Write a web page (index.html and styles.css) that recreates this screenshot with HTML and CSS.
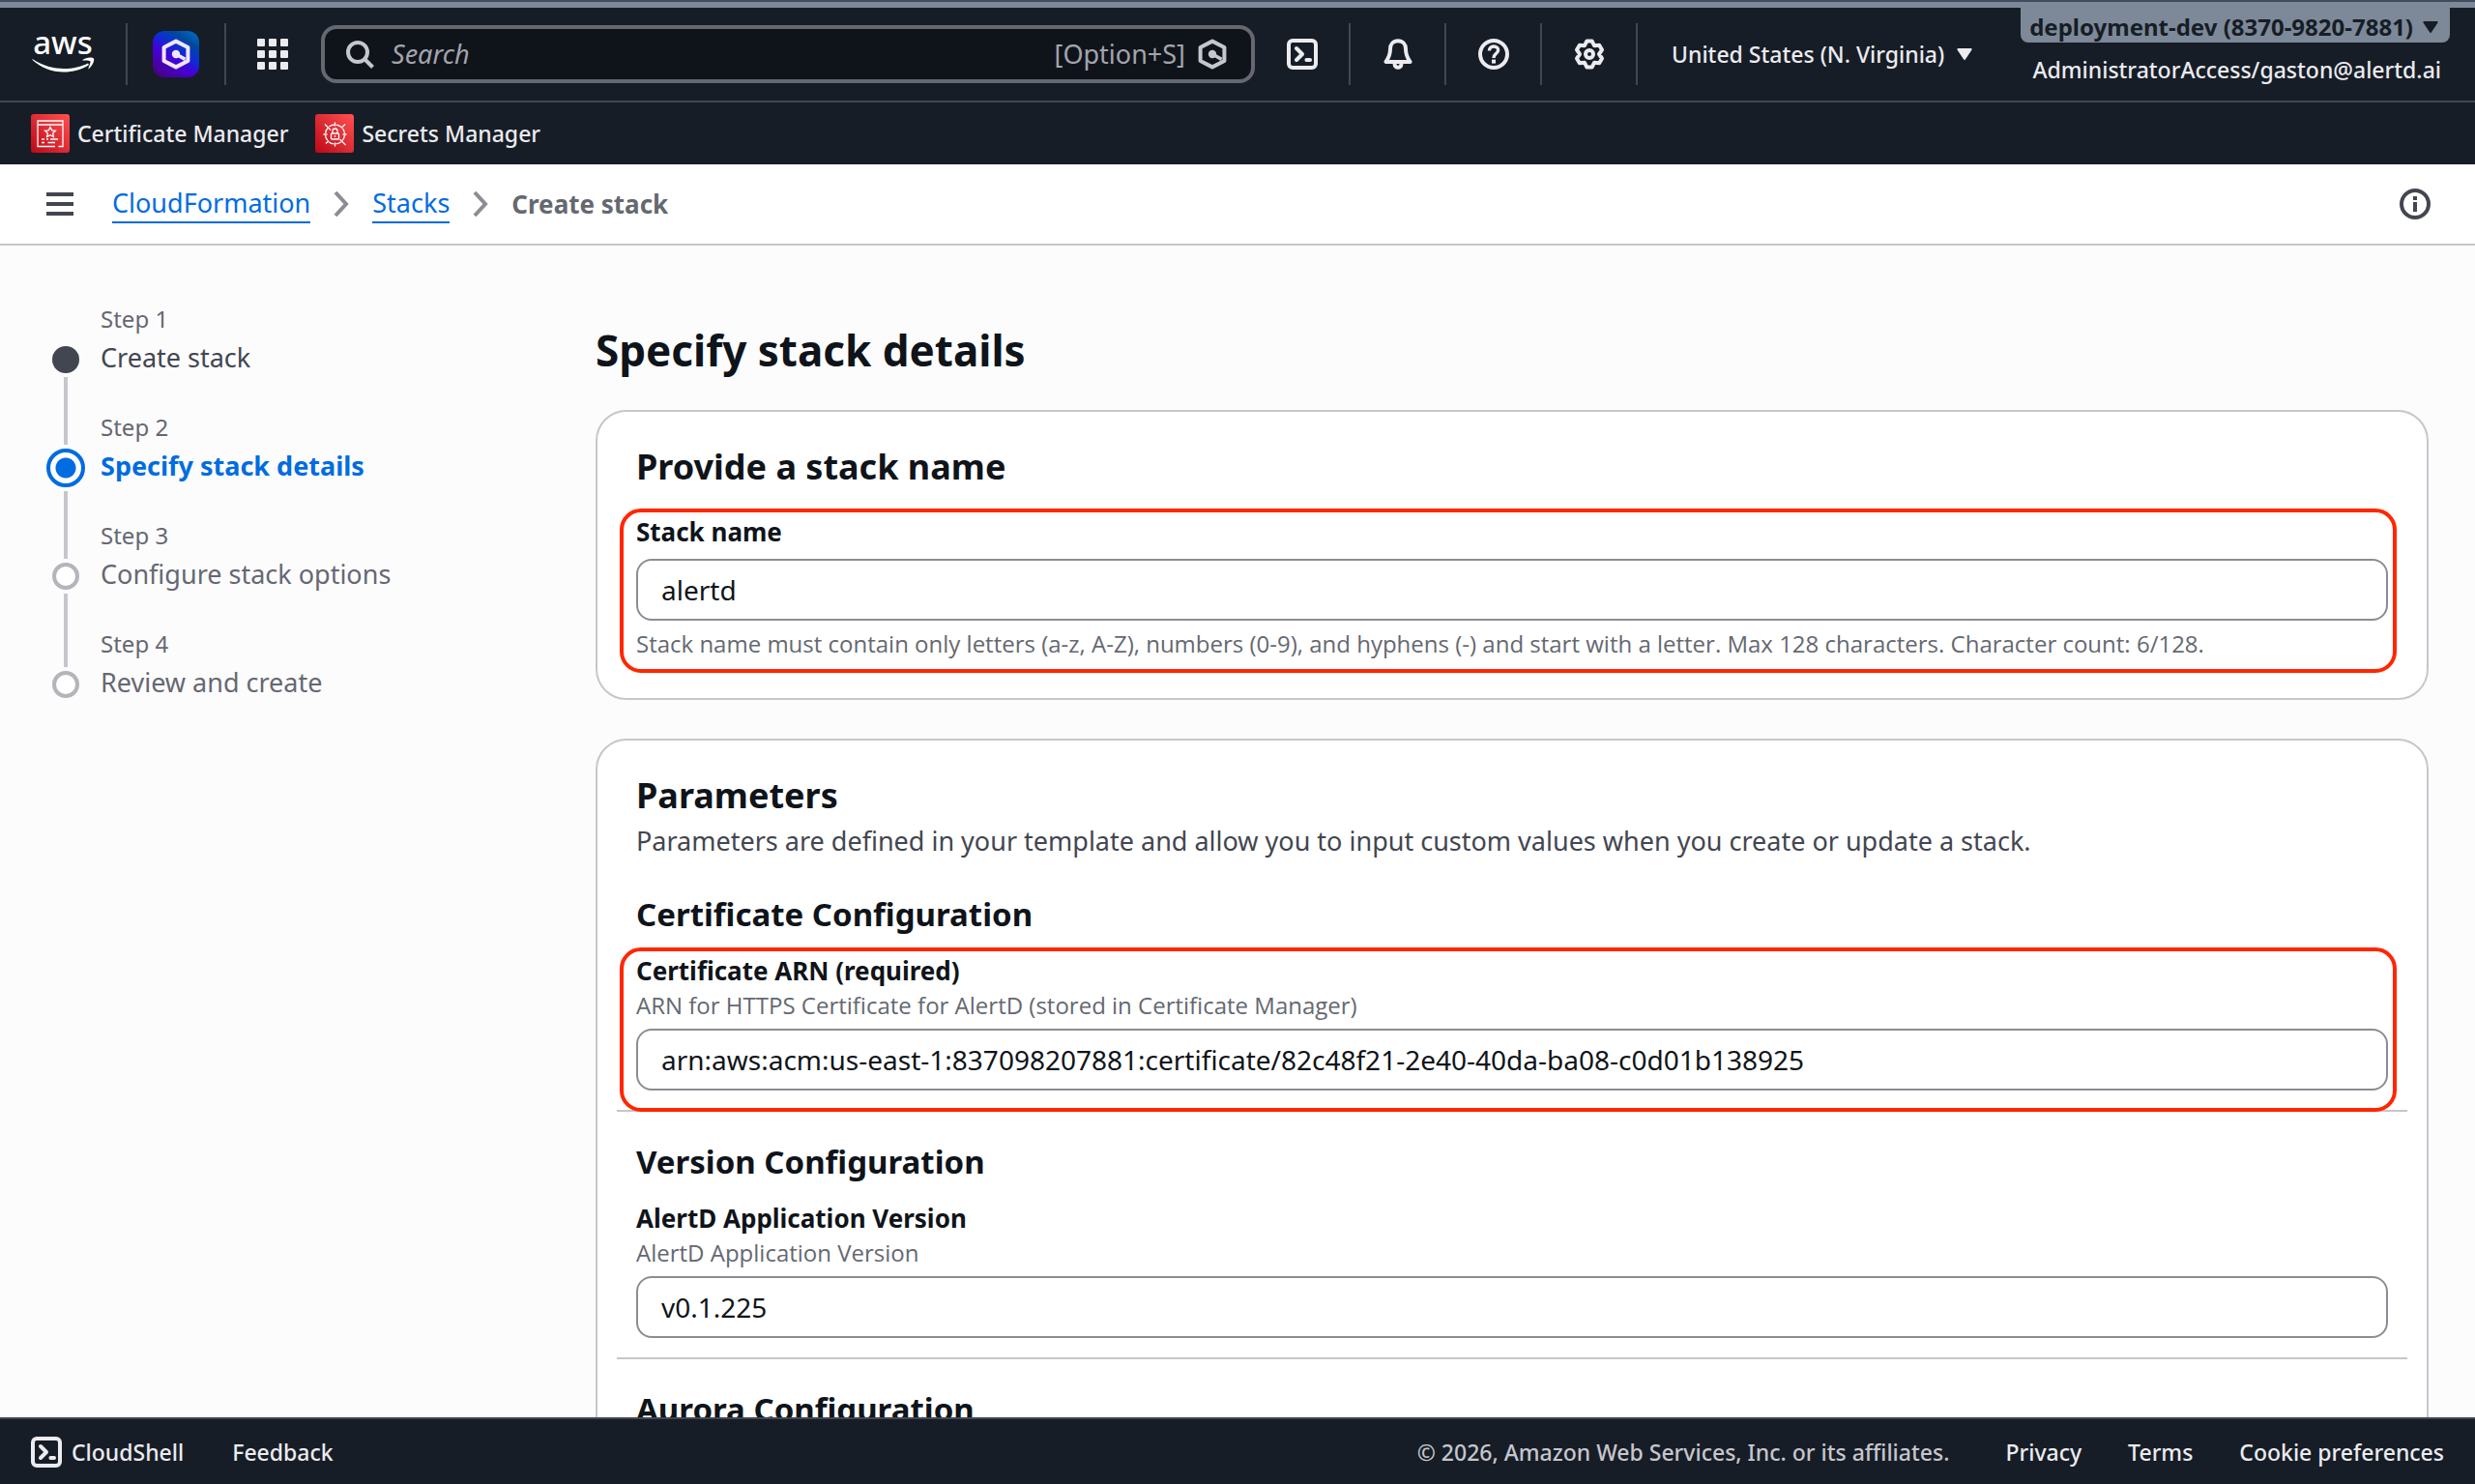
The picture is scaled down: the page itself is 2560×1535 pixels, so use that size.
FILE: index.html
```html
<!DOCTYPE html>
<html lang="en">

<head>
  <meta charset="UTF-8">
  <meta name="viewport" content="width=device-width, initial-scale=1.0">
  <title>Create stack | CloudFormation</title>
  <link rel="stylesheet" href="styles.css">
</head>

<body>
  <!-- shared icons -->
  <svg class="sprite" aria-hidden="true">
    <symbol id="icon-shell" viewBox="0 0 16 16">
      <rect x="1" y="1" width="14" height="14" rx="2" fill="none" stroke="currentColor" stroke-width="2" />
      <path d="M5 5l3 3-3 3" fill="none" stroke="currentColor" stroke-width="2" stroke-linecap="round" stroke-linejoin="round" />
      <path d="M10.2 11H12" stroke="currentColor" stroke-width="2" stroke-linecap="round" />
    </symbol>
    <symbol id="icon-q" viewBox="0 0 16 16">
      <path d="M8 1.3l6.2 3.200v7L8 14.700 1.800 11.500v-7z" fill="none" stroke="currentColor" stroke-width="2" stroke-linejoin="round" />
      <circle cx="8" cy="8" r="2.1" fill="currentColor" />
      <path d="M8 8l4.800 2.700" stroke="currentColor" stroke-width="1.8" />
    </symbol>
    <symbol id="icon-caret" viewBox="0 0 16 12">
      <path fill="currentColor" d="M1.500 0h13a1 1 0 0 1 1 1.500L9 11.300a1.200 1.200 0 0 1-2 0L.500 1.500A1 1 0 0 1 1.500 0z" />
    </symbol>
  </svg>

  <header class="top-nav">
    <a class="logo" href="#" aria-label="AWS home">
      <svg width="66" height="80" viewBox="0 -18 66 80">
        <text class="logo-text" x="33" y="22" text-anchor="middle">aws</text>
        <path fill="#fff" d="M1.500 27C12 34 24 37 34 37c10 0 18-2 25-5.500l1 1.500c-8 5.500-17 7.500-26 7.500C22 40.500 10 36 1.500 28z" />
        <path fill="#fff" d="M53 28.500c4-3.500 10-3.500 12-2 1 3-2 8-5.500 11-.8-.2 2.500-6.500 2-8-1-1.300-4.500-1.200-8.500-1z" />
      </svg>
    </a>
    <a class="q-button" href="#" aria-label="Amazon Q">
      <svg width="32" height="32"><use href="#icon-q" /></svg>
    </a>
    <button class="services" type="button" aria-label="Services">
      <svg width="32" height="32" viewBox="0 0 32 32" fill="currentColor">
        <rect x="0" y="0" width="8" height="8" rx="1" /><rect x="12" y="0" width="8" height="8" rx="1" /><rect x="24" y="0" width="8" height="8" rx="1" />
        <rect x="0" y="12" width="8" height="8" rx="1" /><rect x="12" y="12" width="8" height="8" rx="1" /><rect x="24" y="12" width="8" height="8" rx="1" />
        <rect x="0" y="24" width="8" height="8" rx="1" /><rect x="12" y="24" width="8" height="8" rx="1" /><rect x="24" y="24" width="8" height="8" rx="1" />
      </svg>
    </button>
    <div class="search">
      <svg width="32" height="32" viewBox="0 0 32 32" fill="none" stroke="#c6c6cd" stroke-width="4">
        <circle cx="14" cy="14" r="10" />
        <path d="M21 21l8.500 8.500" />
      </svg>
      <input class="search-input" type="search" placeholder="Search" aria-label="Search">
      <span class="shortcut">[Option+S]</span>
      <svg class="search-q" width="32" height="32"><use href="#icon-q" /></svg>
    </div>
    <button class="nav-icon" type="button" aria-label="Open CloudShell">
      <svg width="32" height="32"><use href="#icon-shell" /></svg>
    </button>
    <button class="nav-icon" type="button" aria-label="Notifications">
      <svg width="32" height="32" viewBox="0 0 16 16" fill="none" stroke="currentColor" stroke-width="2" stroke-linejoin="round">
        <path d="M8 1.100c-2.400 0-4 1.700-4 4.200 0 3.300-.8 4.700-2.300 6.700h12.600C12.800 10 12 8.600 12 5.300c0-2.500-1.600-4.200-4-4.200z" />
        <path d="M6.300 12.800v.4a1.700 1.700 0 0 0 3.400 0v-.4" />
      </svg>
    </button>
    <button class="nav-icon" type="button" aria-label="Help">
      <svg width="32" height="32" viewBox="0 0 16 16" fill="none" stroke="currentColor" stroke-width="2">
        <circle cx="8" cy="8" r="7" />
        <path d="M5.700 6.300C5.700 4.900 6.700 4 8 4s2.300.8 2.300 2c0 1.700-2.300 1.700-2.300 4" stroke-width="1.7" />
        <path d="M7 11.800h2" />
      </svg>
    </button>
    <button class="nav-icon" type="button" aria-label="Settings">
      <svg width="32" height="32" viewBox="0 0 16 16" fill="none" stroke="currentColor" stroke-width="2" stroke-linejoin="round">
        <path d="M6.700 1.200h2.600l1.200 2.400 2.600-.2 1.400 2.400L13 8l1.500 2.200-1.400 2.400-2.600-.2-1.200 2.400H6.700l-1.200-2.400-2.600.2-1.400-2.400L3 8 1.500 5.800l1.400-2.400 2.600.2z" />
        <circle cx="8" cy="8" r="2" />
      </svg>
    </button>
    <button class="region" type="button">United States (N. Virginia)
      <svg width="16" height="12"><use href="#icon-caret" /></svg>
    </button>
    <div class="account">
      <button class="account-name" type="button">deployment-dev (8370-9820-7881)
        <svg width="16" height="12"><use href="#icon-caret" /></svg>
      </button>
      <span class="account-role">AdministratorAccess/gaston@alertd.ai</span>
    </div>
  </header>

  <nav class="favorites" aria-label="Favorites">
    <a class="favorite" href="#">
      <svg width="40" height="40" viewBox="0 0 40 40" fill="none" stroke="#fff" stroke-width="1.3">
        <defs>
          <linearGradient id="red" x1="0" y1="1" x2="1" y2="0">
            <stop offset="0" stop-color="#bd0816" />
            <stop offset="1" stop-color="#ff5252" />
          </linearGradient>
        </defs>
        <rect width="40" height="40" rx="3" fill="url(#red)" stroke="none" />
        <path d="M25 33.500H7V7h26v26.500h-4.500M7 11h26" />
        <path d="M20 13.500l1.700 3.300 3.700.5-2.700 2.600.7 3.700-3.400-1.800-3.400 1.800.7-3.700-2.700-2.600 3.700-.5z" />
        <path d="M11 26h3M16 26h2M20 26h8M11 29.500h3M17.500 29.500H25" />
      </svg>
      Certificate Manager
    </a>
    <a class="favorite" href="#">
      <svg width="40" height="40" viewBox="0 0 40 40" fill="none" stroke="#fff" stroke-width="1.3">
        <rect width="40" height="40" rx="3" fill="url(#red)" stroke="none" />
        <circle cx="20.5" cy="21" r="10" stroke-dasharray="5.9 1.95" stroke-dashoffset="-1" />
        <path d="M20.500 8.500v4M20.500 29.500v4M8.500 21h4M28.500 21h4M10 10.500l6 6M31 10.500l-4 4M11 30.500l3-3M31.500 32l-6-6" />
        <rect x="16.5" y="20" width="8" height="6" rx="1" />
        <path d="M18 20v-2.500a2.500 2.500 0 0 1 5 0V20M20.500 22v2" />
      </svg>
      Secrets Manager
    </a>
  </nav>

  <div class="breadcrumb-bar">
    <button class="menu-button" type="button" aria-label="Open navigation">
      <svg width="28" height="24" viewBox="0 0 28 24" fill="currentColor">
        <rect width="28" height="4" /><rect y="10" width="28" height="4" /><rect y="20" width="28" height="4" />
      </svg>
    </button>
    <nav class="breadcrumbs" aria-label="Breadcrumbs">
      <a href="#">CloudFormation</a>
      <svg width="16" height="28" viewBox="0 0 16 28" fill="none" stroke="#8c8c94" stroke-width="4"><path d="M2 2l11 12L2 26" /></svg>
      <a href="#">Stacks</a>
      <svg width="16" height="28" viewBox="0 0 16 28" fill="none" stroke="#8c8c94" stroke-width="4"><path d="M2 2l11 12L2 26" /></svg>
      <span class="current">Create stack</span>
    </nav>
    <button class="info-button" type="button" aria-label="Info">
      <svg width="32" height="32" viewBox="0 0 32 32" fill="none" stroke="currentColor" stroke-width="4">
        <circle cx="16" cy="16" r="14" />
        <path d="M16 8v4M16 14v10" />
      </svg>
    </button>
  </div>

  <main class="page">
    <ol class="steps">
      <li class="step done">
        <span class="step-number">Step 1</span>
        <span class="step-marker"></span>
        <a class="step-name" href="#">Create stack</a>
      </li>
      <li class="step active">
        <span class="step-number">Step 2</span>
        <span class="step-marker"></span>
        <span class="step-name">Specify stack details</span>
      </li>
      <li class="step">
        <span class="step-number">Step 3</span>
        <span class="step-marker"></span>
        <span class="step-name">Configure stack options</span>
      </li>
      <li class="step">
        <span class="step-number">Step 4</span>
        <span class="step-marker"></span>
        <span class="step-name">Review and create</span>
      </li>
    </ol>

    <form class="content">
      <h1>Specify stack details</h1>

      <section class="card">
        <h2>Provide a stack name</h2>
        <div class="field highlight">
          <label for="stackName">Stack name</label>
          <input class="text-input" type="text" id="stackName" value="alertd">
          <p class="hint">Stack name must contain only letters (a-z, A-Z), numbers (0-9), and hyphens (-) and start with a letter. Max 128 characters. Character count: 6/128.</p>
        </div>
      </section>

      <section class="card">
        <h2>Parameters</h2>
        <p class="description">Parameters are defined in your template and allow you to input custom values when you create or update a stack.</p>
        <div class="group">
          <h3>Certificate Configuration</h3>
          <div class="field highlight">
            <label for="certificateArn">Certificate ARN (required)</label>
            <p class="hint">ARN for HTTPS Certificate for AlertD (stored in Certificate Manager)</p>
            <input class="text-input" type="text" id="certificateArn" value="arn:aws:acm:us-east-1:837098207881:certificate/82c48f21-2e40-40da-ba08-c0d01b138925">
          </div>
        </div>
        <div class="group">
          <h3>Version Configuration</h3>
          <div class="field">
            <label for="appVersion">AlertD Application Version</label>
            <p class="hint">AlertD Application Version</p>
            <input class="text-input" type="text" id="appVersion" value="v0.1.225">
          </div>
        </div>
        <div class="group">
          <h3>Aurora Configuration</h3>
        </div>
      </section>
    </form>
  </main>

  <footer class="footer">
    <button class="shell-button" type="button">
      <svg width="32" height="32"><use href="#icon-shell" /></svg>
      CloudShell
    </button>
    <a class="feedback" href="#">Feedback</a>
    <div class="legal">
      <span class="copyright">© 2026, Amazon Web Services, Inc. or its affiliates.</span>
      <a href="#">Privacy</a>
      <a href="#">Terms</a>
      <a href="#">Cookie preferences</a>
    </div>
  </footer>
</body>

</html>
```
FILE: styles.css
```css
*, *::before, *::after {
  box-sizing: border-box;
}

body {
  margin: 0;
  height: 100vh;
  display: flex;
  flex-direction: column;
  overflow: hidden;
  border-top: 2px solid #414d5c;
  font-family: "Noto Sans", "Open Sans", sans-serif;
  font-size: 27px;
  line-height: 40px;
  color: #0f141a;
  background: #fcfcfd;
}

h1, h2, h3, p, ol {
  margin: 0;
  padding: 0;
}

button, input {
  font: inherit;
  color: inherit;
}

button {
  padding: 0;
  border: none;
  background: none;
  cursor: pointer;
}

a {
  color: inherit;
  text-decoration: none;
}

svg {
  display: block;
  flex: none;
}

.sprite {
  position: absolute;
  width: 0;
  height: 0;
}

/* dark bars */
.top-nav, .favorites, .footer {
  flex: none;
  display: flex;
  align-items: center;
  background: #161d26;
  color: #ebebf0;
  font-size: 23px;
  font-weight: 500;
  line-height: 32px;
  white-space: nowrap;
}

/* top navigation */
.top-nav {
  height: 104px;
  border-top: 6px solid #7d8998;
  border-bottom: 2px solid #424650;
}

.logo {
  display: flex;
  align-items: center;
  height: 64px;
  padding: 0 32px;
  border-right: 2px solid #424650;
}

.logo-text {
  font-size: 33px;
  font-weight: 500;
  fill: #fff;
}

.q-button {
  display: flex;
  align-items: center;
  justify-content: center;
  width: 48px;
  height: 48px;
  margin: 0 26px;
  border-radius: 12px;
  background: linear-gradient(35deg, #4a0080 5%, #4400d8 40%, #0a30d0 60%, #004a9e 78%, #0078d0);
  color: #f2e6ff;
}

.services {
  display: flex;
  align-items: center;
  height: 64px;
  padding: 0 34px 0 32px;
  border-left: 2px solid #424650;
}

.search {
  flex: 1;
  max-width: 966px;
  height: 60px;
  display: flex;
  align-items: center;
  padding: 0 24px 0 20px;
  border: 4px solid #656871;
  border-radius: 16px;
  background: #0f141a;
  color: #a4a4ad;
  font-size: 27px;
  font-weight: 400;
}

.search-input {
  flex: 1;
  min-width: 0;
  padding: 0;
  margin-left: 17px;
  border: none;
  outline: none;
  background: none;
}

.search-input::placeholder {
  color: #a4a4ad;
  font-style: italic;
}

.search-q {
  margin-left: 12px;
  color: #c6c6cd;
}

.nav-icon {
  display: flex;
  align-items: center;
  justify-content: center;
  width: 99px;
  height: 64px;
  border-right: 2px solid #424650;
}

.region {
  display: flex;
  align-items: center;
  gap: 13px;
  padding-left: 35px;
}

.account {
  align-self: stretch;
  margin: 0 26px 0 auto;
  display: flex;
  flex-direction: column;
  align-items: flex-end;
  gap: 12px;
}

.account-name {
  display: flex;
  align-items: center;
  gap: 10px;
  padding: 4px 12px 0 9px;
  border-radius: 0 0 8px 8px;
  background: #7d8998;
  color: #161d26;
  font-size: 24px;
  font-weight: 700;
}

.account-role {
  padding-right: 9px;
}

/* favorites bar */
.favorites {
  gap: 28px;
  height: 64px;
  padding: 0 32px;
}

.favorite {
  display: flex;
  align-items: center;
  gap: 8px;
}

/* breadcrumbs */
.breadcrumb-bar {
  flex: none;
  display: flex;
  align-items: center;
  height: 84px;
  padding: 0 46px 0 48px;
  border-bottom: 2px solid #c6c6cd;
  background: #fff;
  color: #424650;
}

.breadcrumbs {
  display: flex;
  align-items: center;
  gap: 24px;
  margin-left: 40px;
}

.breadcrumbs a {
  color: #006ce0;
  line-height: 38px;
  border-bottom: 2px solid #006ce0;
}

.breadcrumbs .current {
  color: #656871;
  font-size: 26px;
  font-weight: 700;
}

.info-button {
  margin-left: auto;
}

/* page */
.page {
  flex: 1;
  min-height: 0;
  overflow: hidden;
  display: grid;
  grid-template-columns: 568px 1fr;
  padding: 60px 48px 0;
}

.steps {
  list-style: none;
}

.step {
  display: grid;
  grid-template-columns: 40px 1fr;
  grid-template-rows: 36px 44px 32px;
  column-gap: 16px;
  color: #656871;
}

/* connector lines above and below a marker */
.step::before,
.step::after {
  content: "";
  grid-column: 1;
  justify-self: center;
  width: 4px;
  background: #c6c6cd;
}

.step::before {
  grid-row: 1;
  margin-bottom: -4px;
}

.step::after {
  grid-row: 3;
  margin-top: -4px;
}

.step.active::before {
  margin-bottom: 2px;
}

.step.active::after {
  margin-top: 2px;
}

.step:first-child::before,
.step:last-child::after {
  display: none;
}

.step-number {
  grid-area: 1 / 2;
  font-size: 24px;
  line-height: 32px;
}

.step-name {
  grid-area: 2 / 2;
}

.step-marker {
  grid-area: 2 / 1;
  place-self: center;
  width: 28px;
  height: 28px;
  border: 4px solid #b4b4bb;
  border-radius: 50%;
  background: #fff;
}

.done .step-marker {
  border-color: #424650;
  background: #424650;
}

.done .step-name {
  color: #424650;
}

.active .step-marker {
  width: 40px;
  height: 40px;
  border-color: #006ce0;
  background: radial-gradient(circle, #006ce0 10px, #fff 11px);
}

.active .step-name {
  color: #006ce0;
  font-weight: 700;
}

/* form */
.content {
  padding-top: 20px;
}

h1 {
  margin-bottom: 34px;
  font-size: 44px;
  line-height: 56px;
}

h2 {
  font-size: 36px;
  line-height: 42px;
}

h3 {
  margin-bottom: 18px;
  font-size: 33px;
  line-height: 40px;
}

.card {
  margin-bottom: 40px;
  padding: 36px 40px 40px;
  border: 2px solid #c6c6cd;
  border-radius: 32px;
  background: #fff;
}

.description {
  margin: 6px 0 36px;
  color: #424650;
}

.field {
  position: relative;
}

h2 + .field {
  margin-top: 26px;
}

.field label {
  display: block;
  font-size: 26px;
  font-weight: 700;
}

.text-input {
  display: block;
  width: 100%;
  height: 64px;
  margin: 8px 0;
  padding: 0 24px;
  border: 2px solid #8c8c94;
  border-radius: 16px;
  background: #fff;
  font-size: 28px;
}

.hint {
  color: #656871;
  font-family: "Open Sans", "Noto Sans", sans-serif;
  font-size: 24px;
  line-height: 32px;
}

/* red callout drawn around a field */
.highlight::before {
  content: "";
  position: absolute;
  top: -4px;
  left: -17px;
  right: -9px;
  height: 170px;
  border: 4px solid #ff2600;
  border-radius: 22px;
  pointer-events: none;
}

.group {
  margin: 0 -20px;
  padding: 0 20px 12px;
}

.group + .group {
  padding-top: 32px;
  border-top: 2px solid #c6c6cd;
}

/* footer */
.footer {
  gap: 50px;
  height: 69px;
  padding: 0 32px;
  border-top: 2px solid #424650;
}

.shell-button {
  display: flex;
  align-items: center;
  gap: 10px;
}

.legal {
  display: flex;
  gap: 48px;
  margin-left: auto;
}

.copyright {
  margin-right: 10px;
  color: #c6c6cd;
}
```
